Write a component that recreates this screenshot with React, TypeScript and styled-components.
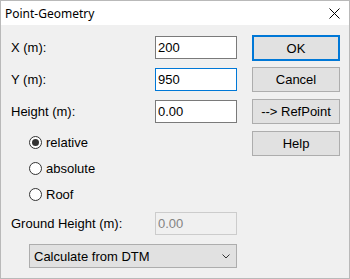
import * as React from "react"
import styled, { createGlobalStyle } from "styled-components"

const GlobalStyle = createGlobalStyle`
  html, body {
    margin: 0;
    padding: 0;
    background: #f0f0f0;
  }
  * {
    box-sizing: border-box;
  }
`

const Window = styled.div`
  width: 350px;
  height: 279px;
  display: flex;
  flex-direction: column;
  border: 1px solid #b9b9b9;
  background: #f0f0f0;
  font-family: "Liberation Sans", Arial, sans-serif;
  font-size: 13px;
  color: #000;
`

const TitleBar = styled.div`
  height: 24px;
  flex: none;
  display: flex;
  align-items: center;
  justify-content: space-between;
  padding: 0 9px 0 4px;
  background: #fff;
  font-family: "Noto Sans", "Open Sans", sans-serif;
  font-size: 12px;
`

const CloseButton = styled.button`
  width: 11px;
  height: 11px;
  padding: 0;
  border: 0;
  background: none;
  display: flex;
`

const Body = styled.div`
  flex: 1;
  display: flex;
  gap: 15px;
  padding: 10px 9px 10px 9px;
`

const Form = styled.div`
  width: 227px;
  display: flex;
  flex-direction: column;
  padding-top: 1px;
`

const FieldRow = styled.div<{ $top?: number }>`
  display: grid;
  grid-template-columns: 145px 82px;
  align-items: center;
  height: 23px;
  margin-top: ${(p) => p.$top ?? 0}px;
`

const Label = styled.label`
  padding-left: 1px;
  white-space: nowrap;
`

const TextBox = styled.input<{ $focused?: boolean }>`
  width: 82px;
  height: 23px;
  padding: 0 2px;
  border: 1px solid ${(p) => (p.$focused ? "#0078d7" : "#7a7a7a")};
  background: #fff;
  font-family: inherit;
  font-size: 13px;
  color: #000;
  outline: none;

  &:disabled {
    border-color: #cccccc;
    background: #f0f0f0;
    color: #838383;
  }
`

const RadioGroup = styled.div`
  display: flex;
  flex-direction: column;
  gap: 6px;
  margin-top: 9px;
  padding-left: 19px;
`

const RadioRow = styled.label`
  height: 20px;
  display: flex;
  align-items: center;
  gap: 4px;
`

const Radio = styled.input.attrs({ type: "radio" })`
  appearance: none;
  margin: 0;
  width: 13px;
  height: 13px;
  border: 1px solid #333;
  border-radius: 50%;
  background: #fff;
  display: grid;
  place-items: center;

  &:checked::after {
    content: "";
    width: 7px;
    height: 7px;
    border-radius: 50%;
    background: #333;
  }
`

const Select = styled.div`
  margin: 9px 0 0 19px;
  width: 208px;
  height: 24px;
  display: flex;
  align-items: center;
  justify-content: space-between;
  padding: 0 6px 0 4px;
  border: 1px solid #adadad;
  background: #e1e1e1;
`

const Buttons = styled.div`
  width: 88px;
  display: flex;
  flex-direction: column;
  gap: 7px;
`

const Button = styled.button<{ $default?: boolean }>`
  height: ${(p) => (p.$default ? 26 : 25)}px;
  margin-bottom: ${(p) => (p.$default ? -1 : 0)}px;
  padding: 0;
  border: ${(p) => (p.$default ? "2px solid #0078d7" : "1px solid #adadad")};
  background: #e1e1e1;
  font-family: inherit;
  font-size: 13px;
  color: #000;
`

const App: React.FC = () => (
  <Window>
    <GlobalStyle />
    <TitleBar>
      <span>Point-Geometry</span>
      <CloseButton aria-label="Close">
        <svg width="11" height="11" viewBox="0 0 11 11">
          <path d="M0.5 0.5 L10.5 10.5 M10.5 0.5 L0.5 10.5" stroke="#000" strokeWidth="1" />
        </svg>
      </CloseButton>
    </TitleBar>

    <Body>
      <Form>
        <FieldRow>
          <Label>X (m):</Label>
          <TextBox defaultValue="200" />
        </FieldRow>
        <FieldRow $top={9}>
          <Label>Y (m):</Label>
          <TextBox defaultValue="950" $focused />
        </FieldRow>
        <FieldRow $top={9}>
          <Label>Height (m):</Label>
          <TextBox defaultValue="0.00" />
        </FieldRow>

        <RadioGroup>
          <RadioRow>
            <Radio name="mode" defaultChecked />
            relative
          </RadioRow>
          <RadioRow>
            <Radio name="mode" />
            absolute
          </RadioRow>
          <RadioRow>
            <Radio name="mode" />
            Roof
          </RadioRow>
        </RadioGroup>

        <FieldRow $top={8}>
          <Label>Ground Height (m):</Label>
          <TextBox defaultValue="0.00" disabled />
        </FieldRow>

        <Select>
          <span>Calculate from DTM</span>
          <svg width="8" height="5" viewBox="0 0 8 5">
            <path d="M0.5 0.5 L4 4 L7.5 0.5" fill="none" stroke="#333" strokeWidth="1" />
          </svg>
        </Select>
      </Form>

      <Buttons>
        <Button $default>OK</Button>
        <Button>Cancel</Button>
        <Button>--&gt; RefPoint</Button>
        <Button>Help</Button>
      </Buttons>
    </Body>
  </Window>
)

export default App
